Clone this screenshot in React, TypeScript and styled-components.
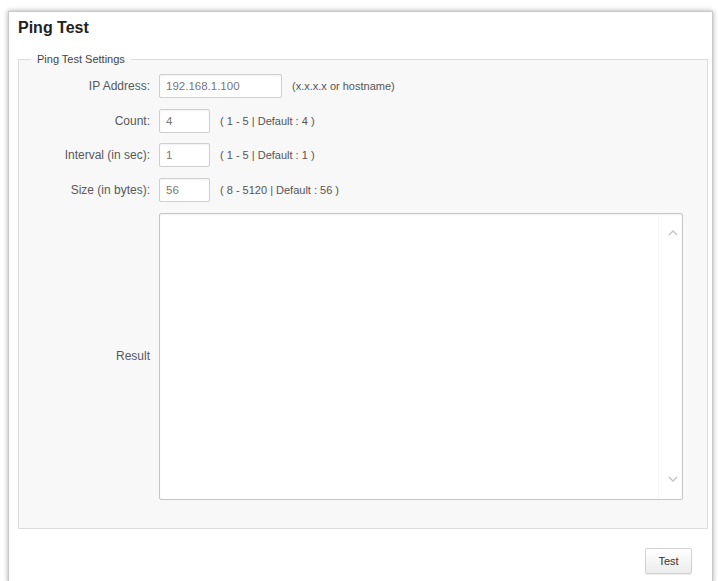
import React from "react";
import styled, { createGlobalStyle } from "styled-components";

const Global = createGlobalStyle`
  html, body { margin: 0; padding: 0; background: #fff; overflow: hidden; }
  body { font-family: "Liberation Sans", Arial, sans-serif; }
  * { box-sizing: border-box; }
`;

const Panel = styled.div`
  width: 705px;
  height: 572px;
  margin: 11px 0 0 8px;
  border: 1px solid #c9c9c9;
  background: #fff;
  box-shadow: 0 0 5px rgba(0, 0, 0, 0.35);
  padding-top: 6px;
`;

const Title = styled.h1`
  margin: 0;
  padding: 0 0 0 9px;
  font-size: 16px;
  line-height: 19px;
  font-weight: bold;
  color: #222;
`;

const Fieldset = styled.fieldset`
  margin: 16px 4px 0 9px;
  padding: 8px 24px 28px 12px;
  border: 1px solid #dcdcdc;
  background: #f8f8f8;
  min-width: 0;
`;

const Legend = styled.legend`
  padding: 0 6px;
  font-size: 11px;
  line-height: 13px;
  color: #444;
`;

const Grid = styled.div`
  display: grid;
  grid-template-columns: 119px 1fr;
  column-gap: 9px;
  row-gap: 10.5px;
  align-items: center;
`;

const Label = styled.label`
  text-align: right;
  font-size: 12px;
  color: #595959;
  white-space: nowrap;
`;

const Field = styled.div`
  display: flex;
  align-items: center;
  gap: 10px;
`;

const Input = styled.input<{ $w: number }>`
  width: ${(p) => p.$w}px;
  height: 24px;
  padding: 0 6px;
  border: 1px solid #cfcfcf;
  border-radius: 2px;
  background: #fff;
  font-family: "Liberation Sans", Arial, sans-serif;
  font-size: 11.5px;
  color: #777;
  box-shadow: inset 0 1px 2px rgba(0, 0, 0, 0.06);
  outline: none;
`;

const Hint = styled.span`
  font-size: 11px;
  color: #555;
  white-space: nowrap;
`;

const ResultBox = styled.div`
  position: relative;
  height: 287px;
  margin-top: 1px;
`;

const TextArea = styled.textarea`
  display: block;
  width: 100%;
  height: 100%;
  resize: none;
  overflow: hidden;
  border: 1px solid #c6c6c6;
  border-radius: 2px;
  background: #fff;
  box-shadow: inset 0 1px 2px rgba(0, 0, 0, 0.06);
  outline: none;
`;

const Track = styled.div`
  position: absolute;
  top: 2px;
  bottom: 2px;
  right: 2px;
  width: 23px;
  border-left: 1px solid #f5f5f5;
  pointer-events: none;
`;

const Arrow = styled.svg<{ $pos: "top" | "bottom" }>`
  position: absolute;
  right: 5px;
  ${(p) => (p.$pos === "top" ? "top: 17px;" : "bottom: 18px;")}
  width: 10px;
  height: 6px;
`;

const Footer = styled.div`
  display: flex;
  justify-content: flex-end;
  padding: 19px 20px 0 0;
`;

const Button = styled.button`
  width: 47px;
  height: 26px;
  border: 1px solid #d2d2d2;
  border-radius: 2px;
  background: linear-gradient(#ffffff, #ececec);
  font-family: "Liberation Sans", Arial, sans-serif;
  font-size: 11px;
  color: #333;
  box-shadow: 0 1px 1px rgba(0, 0, 0, 0.08);
`;

const rows = [
  { label: "IP Address:", value: "192.168.1.100", w: 123, hint: "(x.x.x.x or hostname)" },
  { label: "Count:", value: "4", w: 51, hint: "( 1 - 5 | Default : 4 )" },
  { label: "Interval (in sec):", value: "1", w: 51, hint: "( 1 - 5 | Default : 1 )" },
  { label: "Size (in bytes):", value: "56", w: 51, hint: "( 8 - 5120 | Default : 56 )" },
];

export default function App() {
  return (
    <>
      <Global />
      <Panel>
        <Title>Ping Test</Title>
        <Fieldset>
          <Legend>Ping Test Settings</Legend>
          <Grid>
            {rows.map((r) => (
              <React.Fragment key={r.label}>
                <Label>{r.label}</Label>
                <Field>
                  <Input $w={r.w} defaultValue={r.value} />
                  <Hint>{r.hint}</Hint>
                </Field>
              </React.Fragment>
            ))}
            <Label>Result</Label>
            <ResultBox>
              <TextArea readOnly />
              <Track />
              <Arrow $pos="top" viewBox="0 0 10 6">
                <path d="M1 5 L5 1 L9 5" fill="none" stroke="#c4c4c4" strokeWidth="1.4" />
              </Arrow>
              <Arrow $pos="bottom" viewBox="0 0 10 6">
                <path d="M1 1 L5 5 L9 1" fill="none" stroke="#c4c4c4" strokeWidth="1.4" />
              </Arrow>
            </ResultBox>
          </Grid>
        </Fieldset>
        <Footer>
          <Button>Test</Button>
        </Footer>
      </Panel>
    </>
  );
}
